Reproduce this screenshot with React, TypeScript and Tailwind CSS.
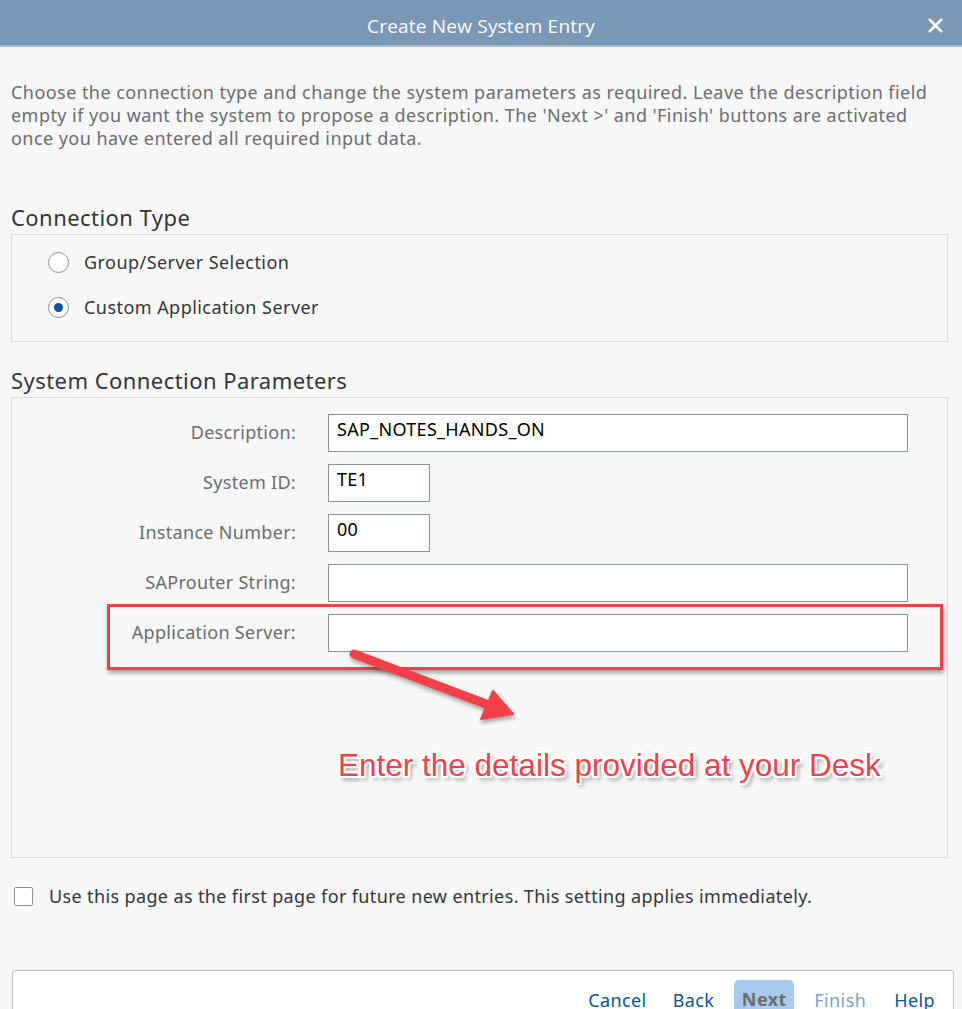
import { X } from 'lucide-react'

const font = { fontFamily: '"Noto Sans", "Open Sans", sans-serif' }

type Field = { label: string; value: string; width: string }

const fields: Field[] = [
  { label: 'Description:', value: 'SAP_NOTES_HANDS_ON', width: 'w-[580px]' },
  { label: 'System ID:', value: 'TE1', width: 'w-[102px]' },
  { label: 'Instance Number:', value: '00', width: 'w-[102px]' },
  { label: 'SAProuter String:', value: '', width: 'w-[580px]' },
  { label: 'Application Server:', value: '', width: 'w-[580px]' },
]

function Radio({ checked, label }: { checked?: boolean; label: string }) {
  return (
    <div className="flex items-center h-[22px]">
      <span className="w-[21px] h-[21px] rounded-full border border-[#89919a] bg-white flex items-center justify-center">
        {checked && <span className="w-[9px] h-[9px] rounded-full bg-[#0854a0]" />}
      </span>
      <span className="ml-[15px] text-[18px] tracking-[0.45px] text-[#32363a]">{label}</span>
    </div>
  )
}

export default function App() {
  return (
    <div className="w-[962px] h-[1009px] bg-[#f7f7f7] overflow-hidden flex flex-col" style={font}>
      {/* Title bar */}
      <div className="h-[47px] bg-[#7a98b6] border-b-2 border-[#a9bdd2] relative flex items-center justify-center pt-[7px] shrink-0">
        <span className="text-[19px] tracking-[0.2px] text-white" style={{ fontFamily: '"Open Sans", sans-serif' }}>
          Create New System Entry
        </span>
        <X size={23} strokeWidth={2.6} className="absolute right-[15px] top-[14px] text-white" />
      </div>

      <div className="px-[11px]">
        <p className="mt-[34px] text-[18px] leading-[23px] tracking-[0.45px] text-[#6a6d70] pr-[10px]">
          Choose the connection type and change the system parameters as required. Leave the description field
          empty if you want the system to propose a description. The 'Next &gt;' and 'Finish' buttons are activated
          once you have entered all required input data.
        </p>

        <h2 className="mt-[52px] text-[22px] leading-[30px] tracking-[0.45px] text-[#32363a]">Connection Type</h2>
        <div className="mt-[2px] w-[937px] h-[108px] border border-[#d9d9d9] pl-[36px] pt-[16px] flex flex-col gap-[23px]">
          <Radio label="Group/Server Selection" />
          <Radio checked label="Custom Application Server" />
        </div>

        <h2 className="mt-[23px] text-[22px] leading-[30px] tracking-[0.45px] text-[#32363a]">System Connection Parameters</h2>
        <div className="mt-[2px] w-[937px] h-[461px] border border-[#d9d9d9] relative pt-[16px]">
          <div className="flex flex-col gap-[12px]">
            {fields.map((f) => (
              <div key={f.label} className="flex items-center">
                <span className="w-[284px] text-right text-[18px] tracking-[0.3px] text-[#6a6d70] -translate-y-[1px]">{f.label}</span>
                <span
                  className={`ml-[32px] h-[38px] ${f.width} bg-white border border-[#89919a] px-[8px] pt-[1px] text-[18px] tracking-[0.3px] text-[#000] leading-[26px]`}
                >
                  {f.value}
                </span>
              </div>
            ))}
          </div>

          {/* annotation overlay */}
          <div className="absolute left-[95px] top-[206px] w-[836px] h-[66px] border-[3px] border-[#f24048] shadow-[1px_3px_4px_rgba(0,0,0,0.35)]" />
          <svg className="absolute left-0 top-0" width="937" height="461" viewBox="0 0 937 461">
            <defs>
              <filter id="sh" x="-20%" y="-20%" width="140%" height="140%">
                <feDropShadow dx="1" dy="3" stdDeviation="2" floodColor="#000" floodOpacity="0.35" />
              </filter>
            </defs>
            <g filter="url(#sh)" fill="#f24048" stroke="#f24048">
              <line x1="342" y1="256" x2="474" y2="306" strokeWidth="9" strokeLinecap="round" />
              <polygon points="481,293 469,321 501,316" strokeWidth="2" strokeLinejoin="round" />
            </g>
          </svg>
          <div
            className="absolute left-[326px] top-[344px] text-[31.5px] text-[#f24048]"
            style={{
              fontFamily: '"Liberation Sans", Arial, sans-serif',
              textShadow:
                '2px 0 0 #fff, -2px 0 0 #fff, 0 2px 0 #fff, 0 -2px 0 #fff, 2px 2px 0 #fff, -2px -2px 0 #fff, 2px -2px 0 #fff, -2px 2px 0 #fff, 3px 4px 4px rgba(0,0,0,0.45)',
            }}
          >
            Enter the details provided at your Desk
          </div>
        </div>

        <div className="mt-[25px] flex items-center pl-[3px]">
          <span className="w-[19px] h-[19px] border border-[#89919a] bg-white rounded-[2px]" />
          <span className="ml-[16px] text-[18px] tracking-[0.37px] text-[#32363a]">
            Use this page as the first page for future new entries. This setting applies immediately.
          </span>
        </div>
      </div>

      {/* Footer */}
      <div className="mt-auto ml-[12px] w-[942px] h-[39px] bg-white border border-b-0 border-[#bfbfbf] rounded-t-[4px] flex items-end justify-end pr-[18px] text-[18px] tracking-[0.4px]">
        <span className="leading-[24px] translate-y-[3px] text-[#0854a0]">Cancel</span>
        <span className="ml-[26px] leading-[24px] translate-y-[3px] text-[#0854a0]">Back</span>
        <span className="ml-[20px] w-[60px] h-[29px] rounded-t-[5px] bg-[#a6cbef] text-center leading-[38px] font-bold text-[#6a6d70]">Next</span>
        <span className="ml-[20px] leading-[24px] translate-y-[3px] text-[#7d9fc7]">Finish</span>
        <span className="ml-[28px] leading-[24px] translate-y-[3px] text-[#0854a0]">Help</span>
      </div>
    </div>
  )
}
